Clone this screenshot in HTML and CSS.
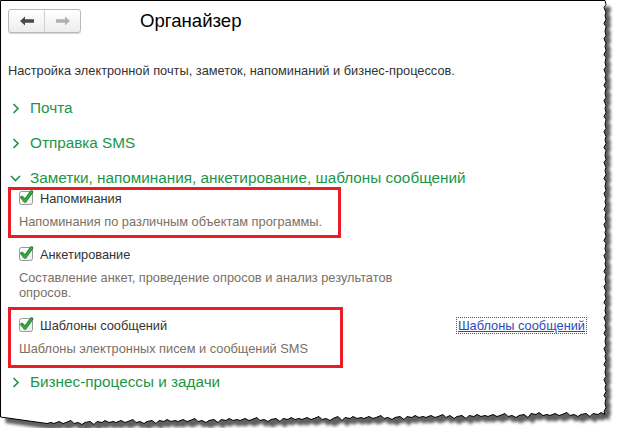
FILE: index.html
```html
<!DOCTYPE html>
<html lang="ru">
<head>
<meta charset="utf-8">
<title>Органайзер</title>
<link rel="stylesheet" href="styles.css">
</head>
<body>
<div class="screen">
  <header class="head">
    <div class="nav">
      <button class="nav-btn" type="button" aria-label="Назад">
        <svg width="16" height="10" viewBox="0 0 16 10"><path d="M1 5 L6 0.5 V3.3 H15 V6.7 H6 V9.5 Z" fill="#4a4a4a"/></svg>
      </button>
      <button class="nav-btn" type="button" aria-label="Вперёд">
        <svg width="16" height="10" viewBox="0 0 16 10"><path d="M15 5 L10 0.5 V3.3 H1 V6.7 H10 V9.5 Z" fill="#b0b0b0"/></svg>
      </button>
    </div>
    <h1 class="title">Органайзер</h1>
  </header>

  <p class="intro">Настройка электронной почты, заметок, напоминаний и бизнес-процессов.</p>

  <div class="group">
    <div class="group-head"><svg class="chev" width="8" height="11" viewBox="0 0 8 11"><path d="M1.5 1 L6 5.5 L1.5 10" fill="none" stroke="#1c8f45" stroke-width="1.6"/></svg>Почта</div>
  </div>
  <div class="group">
    <div class="group-head"><svg class="chev" width="8" height="11" viewBox="0 0 8 11"><path d="M1.5 1 L6 5.5 L1.5 10" fill="none" stroke="#1c8f45" stroke-width="1.6"/></svg>Отправка SMS</div>
  </div>
  <div class="group">
    <div class="group-head"><svg class="chev down" width="11" height="8" viewBox="0 0 11 8"><path d="M1 2 L5.5 6.5 L10 2" fill="none" stroke="#1c8f45" stroke-width="1.6"/></svg>Заметки, напоминания, анкетирование, шаблоны сообщений</div>
    <div class="options">
      <div class="option marked m1">
        <label class="check">
          <svg class="box" width="15" height="15" viewBox="0 0 15 15"><defs><linearGradient id="bg1" x1="0" y1="0" x2="0" y2="1"><stop offset="0" stop-color="#ffffff"/><stop offset="1" stop-color="#ececec"/></linearGradient></defs><rect x="0.5" y="1.5" width="13" height="13" rx="2" fill="url(#bg1)" stroke="#9a9a9a"/><path d="M3 7.5 L6 11 L12.5 2" fill="none" stroke="#1f6d2a" stroke-width="3.4" stroke-linecap="round" stroke-linejoin="round"/><path d="M3 7.5 L6 11 L12.5 2" fill="none" stroke="#2fb33a" stroke-width="2" stroke-linecap="round" stroke-linejoin="round"/></svg>
          <span>Напоминания</span>
        </label>
        <p class="hint">Напоминания по различным объектам программы.</p>
      </div>
      <div class="option">
        <label class="check">
          <svg class="box" width="15" height="15" viewBox="0 0 15 15"><rect x="0.5" y="1.5" width="13" height="13" rx="2" fill="url(#bg1)" stroke="#9a9a9a"/><path d="M3 7.5 L6 11 L12.5 2" fill="none" stroke="#1f6d2a" stroke-width="3.4" stroke-linecap="round" stroke-linejoin="round"/><path d="M3 7.5 L6 11 L12.5 2" fill="none" stroke="#2fb33a" stroke-width="2" stroke-linecap="round" stroke-linejoin="round"/></svg>
          <span>Анкетирование</span>
        </label>
        <p class="hint">Составление анкет, проведение опросов и анализ результатов<br>опросов.</p>
      </div>
      <div class="option marked m3">
        <div class="opt-row">
          <label class="check">
            <svg class="box" width="15" height="15" viewBox="0 0 15 15"><rect x="0.5" y="1.5" width="13" height="13" rx="2" fill="url(#bg1)" stroke="#9a9a9a"/><path d="M3 7.5 L6 11 L12.5 2" fill="none" stroke="#1f6d2a" stroke-width="3.4" stroke-linecap="round" stroke-linejoin="round"/><path d="M3 7.5 L6 11 L12.5 2" fill="none" stroke="#2fb33a" stroke-width="2" stroke-linecap="round" stroke-linejoin="round"/></svg>
            <span>Шаблоны сообщений</span>
          </label>
          <a class="link" href="#">Шаблоны сообщений</a>
        </div>
        <p class="hint">Шаблоны электронных писем и сообщений SMS</p>
      </div>
    </div>
  </div>
  <div class="group">
    <div class="group-head"><svg class="chev" width="8" height="11" viewBox="0 0 8 11"><path d="M1.5 1 L6 5.5 L1.5 10" fill="none" stroke="#1c8f45" stroke-width="1.6"/></svg>Бизнес-процессы и задачи</div>
  </div>

  <svg class="tear" width="618" height="428" viewBox="0 0 618 428" aria-hidden="true">
    <defs>
      <path id="pg" d="M0.5 0.5 H605
        l1 4 -2 3 2 5 -1 3 1 4 -2 4 2 3 -1 5 1 4 -2 3 2 5 -1 3 1 4 -2 4 2 3 -1 5
        l1 4 -2 3 2 5 -1 3 1 4 -2 4 2 3 -1 5 1 4 -2 3 2 5 -1 3 1 4 -2 4 2 3 -1 5
        l1 4 -2 3 2 5 -1 3 1 4 -2 4 2 3 -1 5 1 4 -2 3 2 5 -1 3 1 4 -2 4 2 3 -1 5
        l1 4 -2 3 2 5 -1 3 1 4 -2 4 2 3 -1 5 1 4 -2 3 2 5 -1 3 1 4 -2 4 2 3 -1 5
        l1 4 -2 3 2 5 -1 3 1 4 -2 4 2 3 -1 5 1 4 -2 3 2 5 -1 3 1 4 -2 4 2 3 -1 5
        l1 4 -2 3 2 5 -1 3 1 4 -2 4 2 3 -1 5 1 4 -2 3 2 5 -1 3 1 4 -2 4 2 3 -1 5
        l1 4 -2 3 2 5 -1 3 1 4 -2 4 2 3 -1 5 1 4 -2 4 1 3
        l-4 -2 -3 2 -5 -1 -3 3 -4 -3 -5 1 -3 2 -4 -2 -4 1 -3 -3 -5 2 -3 1 -4 -2 -5 2 -3 -1 -4 1
        l-4 -3 -3 2 -5 -1 -3 4 -4 -3 -5 1 -3 2 -4 -2 -4 1 -3 -3 -5 2 -3 1 -4 -2 -5 2 -3 -1 -4 1
        l-4 -2 -3 2 -5 -1 -3 3 -4 -3 -5 1 -3 2 -4 -3 -4 2 -3 -3 -5 2 -3 1 -4 -2 -5 2 -3 -1 -4 1
        l-4 -2 -3 2 -5 -1 -3 3 -4 -3 -5 1 -3 2 -4 -2 -4 1 -3 -3 -5 2 -3 1 -4 -2 -5 2 -3 -1 -4 1
        l-4 -2 -3 2 -5 -1 -3 3 -4 -4 -5 2 -3 2 -4 -2 -4 1 -3 -3 -5 2 -3 1 -4 -2 -5 2 -3 -1 -4 1
        l-4 -2 -3 2 -5 -1 -3 3 -4 -3 -5 1 -3 2 -4 -2 -4 1 -3 -3 -5 2 -3 1 -4 -2 -5 2 -3 -1 -4 1
        l-4 -2 -3 2 -5 -1 -3 3 -4 -3 -5 1 -3 2 -4 -2 -4 1 -3 -3 -5 2 -3 1 -4 -2 -5 2 -3 -1 -4 1
        l-4 -2 -3 2 -5 -1 -3 3 -4 -3 -5 1 -3 2 -4 -2 -4 1 -3 -3 -5 2 -3 1 -4 -2 -5 2 -3 -1 -4 1
        l-4 -2 -3 2 -5 -1 -3 3 -4 -3 -5 1 -3 2 -4 -2 -4 1 -3 -3 -5 2 -3 1 -4 -2 -5 2 -3 -1 -4 1
        L0.5 417 Z"/>
      <mask id="outside">
        <rect width="618" height="428" fill="#fff"/>
        <use href="#pg" fill="#000"/>
      </mask>
      <filter id="soft" x="-5%" y="-5%" width="110%" height="110%"><feGaussianBlur stdDeviation="1.6"/></filter>
    </defs>
    <rect width="618" height="428" fill="#fff" mask="url(#outside)"/>
    <g mask="url(#outside)">
      <use href="#pg" transform="translate(5 6)" fill="#5e5e5e" filter="url(#soft)"/>
    </g>
    <use href="#pg" fill="none" stroke="#000" stroke-width="1"/>
  </svg>
</div>
</body>
</html>
```

FILE: styles.css
```css
* { box-sizing: border-box; }
html, body { margin: 0; padding: 0; background: #fff; }
body { font-family: "Liberation Sans", Arial, sans-serif; color: #333; }

.screen {
  position: relative;
  width: 618px;
  height: 428px;
  overflow: hidden;
  padding: 9px 0 0 8px;
}

.head { display: flex; align-items: center; height: 24px; }
.nav {
  display: flex;
  width: 73px;
  height: 24px;
  border: 1px solid #b9b9b9;
  border-radius: 3px;
  background: linear-gradient(#ffffff, #ededed);
  box-shadow: 0 1px 0 #d6d6d6;
}
.nav-btn {
  flex: 1;
  display: flex;
  align-items: center;
  justify-content: center;
  border: 0;
  background: transparent;
  padding: 0;
}
.nav-btn + .nav-btn { border-left: 1px solid #cfcfcf; }

.title {
  margin: 0 0 0 59px;
  font-size: 18.6px;
  font-weight: normal;
  color: #000;
  line-height: 24px;
}

.intro {
  margin: 30px 0 0 0;
  font-size: 12.8px;
  line-height: 15px;
  color: #333;
}

.group-head {
  display: flex;
  align-items: center;
  height: 18px;
  margin-top: 17px;
  font-size: 15.3px;
  line-height: 18px;
  color: #1c9548;
}
.group:first-of-type .group-head { margin-top: 21px; }
.chev { margin: 0 10px 0 4px; }
.chev.down { margin: 0 9px 0 2px; }

.options { padding: 4px 0 0 11px; width: 579px; }
.option { position: relative; margin-bottom: 18px; }
.option:last-child { margin-bottom: 0; }

.marked::after {
  content: "";
  position: absolute;
  border: 3px solid #ea1c24;
  pointer-events: none;
}
.m1::after { left: -11px; top: -4px; width: 327px; height: 45px; }
.m3::after { left: -11px; top: -11px; width: 329px; height: 55px; }

.opt-row { display: flex; justify-content: space-between; align-items: center; height: 15px; }
.check {
  display: flex;
  align-items: center;
  height: 15px;
  font-size: 12.8px;
  line-height: 15px;
  color: #333;
}
.box { margin: -2px 6px 0 0; }

.hint {
  margin: 8px 0 0 0;
  font-size: 12.8px;
  line-height: 15px;
  color: #7a7064;
}

.link {
  font-size: 12.8px;
  line-height: 15px;
  color: #2b4bbd;
  text-decoration: underline;
  outline: 1px dotted #555;
  outline-offset: 0;
  padding: 0 1px;
  margin-right: 1px;
}

.tear { position: absolute; left: 0; top: 0; }
```
